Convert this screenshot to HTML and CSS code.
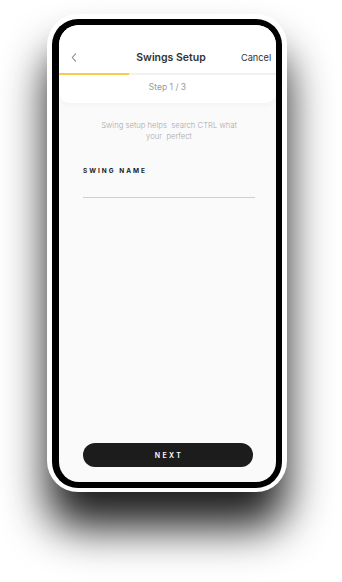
FILE: index.html
```html
<!DOCTYPE html>
<html lang="en">
<head>
<meta charset="utf-8">
<title>Swings Setup</title>
<link rel="stylesheet" href="styles.css">
</head>
<body>
<div class="stage">
  <div class="phone">
    <div class="frame">
      <div class="screen">
        <header class="head">
          <div class="nav">
            <span class="back" aria-label="Back">
              <svg width="6" height="9" viewBox="0 0 6 9"><path d="M4.6 0.8 L1.2 4.5 L4.6 8.2" fill="none" stroke="#8a8a8a" stroke-width="1.1" stroke-linecap="round" stroke-linejoin="round"/></svg>
            </span>
            <span class="title">Swings Setup</span>
            <span class="cancel">Cancel</span>
          </div>
          <div class="progress"><div class="progress-fill"></div></div>
          <div class="step">Step 1 / 3</div>
        </header>
        <main class="body">
          <p class="intro">Swing setup helps&nbsp; search CTRL what<br>your&nbsp; perfect</p>
          <label class="field-label">SWING NAME</label>
          <div class="field-line"></div>
          <button class="next">NEXT</button>
        </main>
      </div>
    </div>
  </div>
</div>
</body>
</html>
```

FILE: styles.css
```css
* { box-sizing: border-box; }
html, body { margin: 0; padding: 0; background: #ffffff; }
body {
  width: 342px;
  height: 582px;
  overflow: hidden;
  font-family: Inter, "Open Sans", "Liberation Sans", sans-serif;
}
.stage {
  padding: 14px 0 0 47px;
}
.phone {
  width: 240px;
  height: 478px;
  background: #ffffff;
  border-radius: 31px;
  padding: 5px 5px 4px 5px;
  box-shadow: 0 36px 44px rgba(0, 0, 0, 0.88);
}
.frame {
  height: 100%;
  background: #000000;
  border-radius: 26px;
  padding: 6px 6px 6px 7px;
}
.screen {
  height: 100%;
  background: #fafafa;
  border-radius: 20px;
  overflow: hidden;
  display: flex;
  flex-direction: column;
}
.head {
  background: #ffffff;
  border-radius: 0 0 10px 10px;
  box-shadow: 0 2px 6px rgba(0, 0, 0, 0.035);
  height: 78px;
}
.nav {
  display: flex;
  align-items: center;
  justify-content: space-between;
  height: 48px;
  padding: 24px 5px 8px 12px;
}
.back { display: flex; width: 30px; }
.title {
  font-size: 10.5px;
  font-weight: 600;
  color: #333333;
}
.cancel {
  width: 30px;
  text-align: right;
  font-size: 9.2px;
  color: #333333;
  white-space: nowrap;
}
.progress {
  height: 1.5px;
  background: #f3f1ec;
}
.progress-fill {
  width: 70px;
  height: 100%;
  background: #f7cb4d;
}
.step {
  text-align: center;
  font-size: 8.5px;
  color: #9a9a9a;
  padding-top: 7px;
}
.body {
  flex: 1;
  display: flex;
  flex-direction: column;
  padding: 17px 21px 15px 24px;
}
.intro {
  margin: 0;
  text-align: center;
  font-size: 7.7px;
  line-height: 11px;
  font-weight: 300;
  color: #a8a8a8;
}
.field-label {
  margin-top: 25px;
  font-size: 6.5px;
  font-weight: 700;
  letter-spacing: 2px;
  color: #1a1a1a;
}
.field-line {
  margin-top: 22px;
  height: 1px;
  background: #cfcfcf;
}
.next {
  margin-top: auto;
  width: 170px;
  height: 24px;
  border: 0;
  border-radius: 12px;
  background: #1c1c1c;
  color: #ffffff;
  font-family: inherit;
  font-size: 7px;
  font-weight: 600;
  letter-spacing: 2.4px;
  padding: 0 0 0 2px;
}
```
